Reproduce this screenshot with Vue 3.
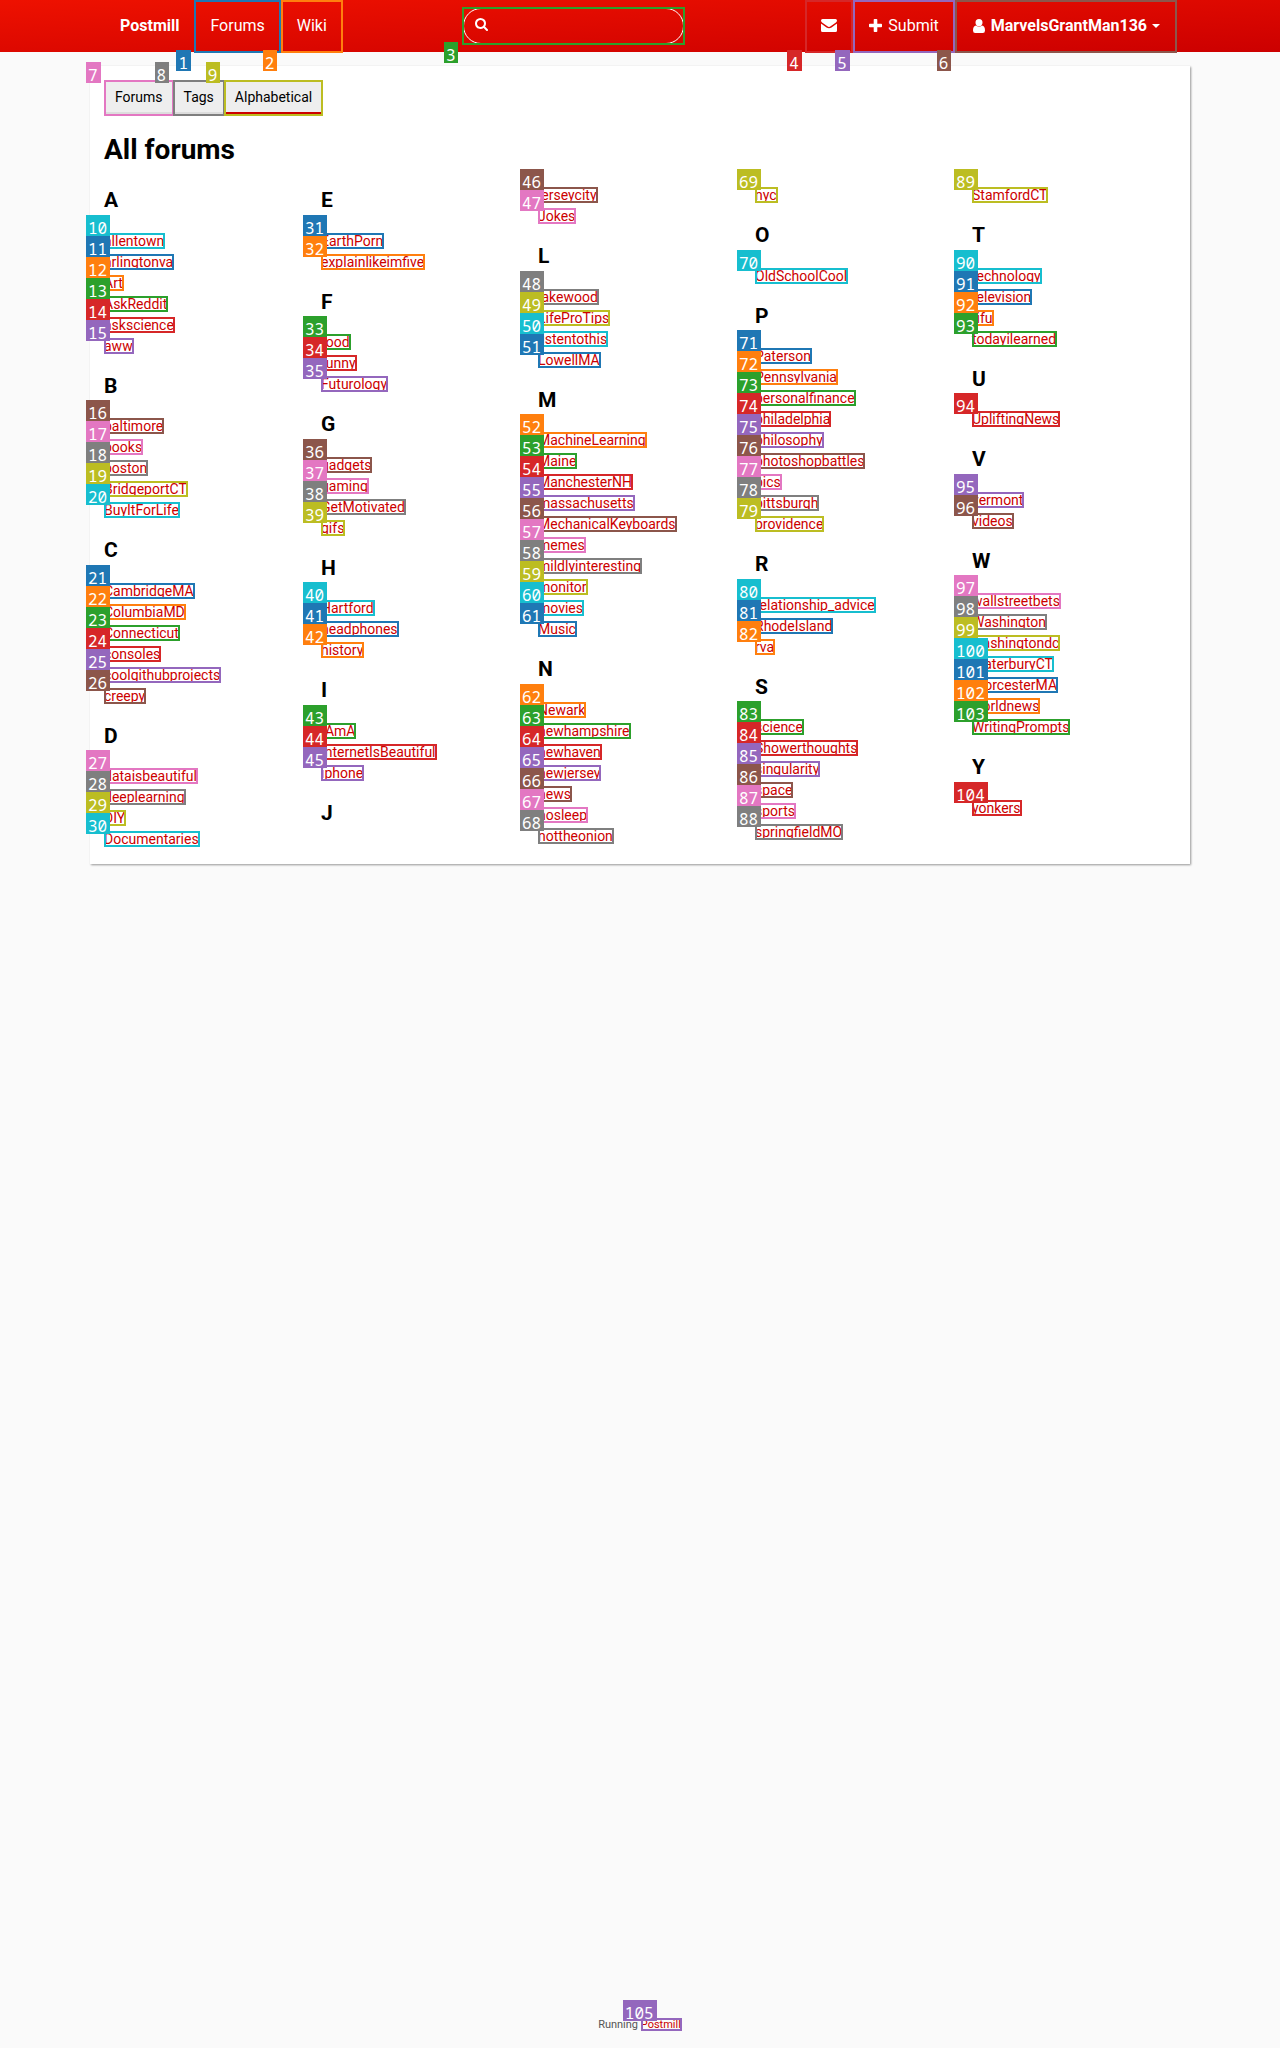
<script setup>
const palette = [
  '#1f77b4', '#ff7f0e', '#2ca02c', '#d62728', '#9467bd',
  '#8c564b', '#e377c2', '#7f7f7f', '#bcbd22', '#17becf',
]
const mark = (n) => ({ '--mark': palette[(n - 1) % 10] })

const tabs = ['Forums', 'Tags', 'Alphabetical']

const source = [
  [
    ['A', 'allentown arlingtonva Art AskReddit askscience aww'],
    ['B', 'baltimore books boston BridgeportCT BuyItForLife'],
    ['C', 'CambridgeMA ColumbiaMD Connecticut consoles coolgithubprojects creepy'],
    ['D', 'dataisbeautiful deeplearning DIY Documentaries'],
  ],
  [
    ['E', 'EarthPorn explainlikeimfive'],
    ['F', 'food funny Futurology'],
    ['G', 'gadgets gaming GetMotivated gifs'],
    ['H', 'Hartford headphones history'],
    ['I', 'IAmA InternetIsBeautiful iphone'],
    ['J', ''],
  ],
  [
    ['', 'jerseycity Jokes'],
    ['L', 'lakewood LifeProTips listentothis LowellMA'],
    ['M', 'MachineLearning Maine ManchesterNH massachusetts MechanicalKeyboards memes mildlyinteresting monitor movies Music'],
    ['N', 'Newark newhampshire newhaven newjersey news nosleep nottheonion'],
  ],
  [
    ['', 'nyc'],
    ['O', 'OldSchoolCool'],
    ['P', 'Paterson Pennsylvania personalfinance philadelphia philosophy photoshopbattles pics pittsburgh providence'],
    ['R', 'relationship_advice RhodeIsland rva'],
    ['S', 'science Showerthoughts singularity space sports springfieldMO'],
  ],
  [
    ['', 'StamfordCT'],
    ['T', 'technology television tifu todayilearned'],
    ['U', 'UpliftingNews'],
    ['V', 'vermont videos'],
    ['W', 'wallstreetbets Washington washingtondc WaterburyCT WorcesterMA worldnews WritingPrompts'],
    ['Y', 'yonkers'],
  ],
]

let next = 10
const columns = source.map((groups) =>
  groups.map(([letter, names]) => ({
    letter,
    forums: names.split(' ').filter(Boolean).map((name) => ({ name, n: next++ })),
  })),
)
</script>

<template>
  <div class="page">
    <header class="site-header">
      <nav class="nav">
        <a href="#" class="nav-link brand">Postmill</a>
        <a href="#" class="nav-link marked" :style="mark(1)">Forums<span class="badge below">1</span></a>
        <a href="#" class="nav-link marked" :style="mark(2)">Wiki<span class="badge below">2</span></a>
        <form class="search marked" :style="mark(3)" @submit.prevent>
          <label class="pill">
            <svg class="icon" width="13" height="14" viewBox="0 0 1664 1792" aria-hidden="true">
              <path fill="currentColor" d="M1152 832q0-185-131.500-316.500T704 384 387.500 515.500 256 832t131.500 316.500T704 1280t316.500-131.500T1152 832zm512 832q0 52-38 90t-90 38q-54 0-90-38l-343-342q-179 124-399 124-143 0-273.500-55.500t-225-150-150-225T0 832t55.500-273.500 150-225 225-150T704 128t273.500 55.500 225 150 150 225T1408 832q0 220-124 399l343 343q37 37 37 90z" />
            </svg>
            <input type="search" name="q" aria-label="Search">
          </label>
          <span class="badge below">3</span>
        </form>
        <a href="#" class="nav-link marked" :style="mark(4)" aria-label="Messages">
          <svg class="icon" width="16" height="13" viewBox="0 0 16 13" aria-hidden="true">
            <path fill="currentColor" d="M1.500 0h13Q16 0 16 1.500 16 2.800 14.600 3.800L9.600 7.300Q8 8.500 6.400 7.300L1.400 3.800Q0 2.800 0 1.500 0 0 1.500 0zM0 4.400Q.4 4.800 1 5.200L5.500 8.400Q8 10 10.500 8.400L15 5.200Q15.600 4.800 16 4.400V11.500Q16 13 14.500 13H1.500Q0 13 0 11.500z" />
          </svg>
          <span class="badge below">4</span>
        </a>
        <a href="#" class="nav-link marked" :style="mark(5)">
          <svg class="icon" width="13" height="13" viewBox="0 0 13 13" aria-hidden="true">
            <path fill="currentColor" d="M5.500 0h2q.8 0 .8.800v3.900h3.900q.8 0 .8.800v2q0 .8-.8.800H8.300v3.900q0 .8-.8.800h-2q-.8 0-.8-.8V8.300H.8Q0 8.300 0 7.500v-2q0-.8.800-.8h3.900V.8q0-.8.800-.8z" />
          </svg>
          Submit<span class="badge below">5</span>
        </a>
        <a href="#" class="nav-link user marked" :style="mark(6)">
          <svg class="icon" width="12" height="14" viewBox="0 0 12 14" aria-hidden="true">
            <path fill="currentColor" d="M6 0a3.500 3.500 0 0 1 3.500 3.500A3.500 3.800 0 0 1 6 7.500 3.500 3.800 0 0 1 2.500 3.500 3.500 3.500 0 0 1 6 0zM3 6.600Q6 9.500 9 6.600 12 7 12 11.500 12 14 9.800 14H2.200Q0 14 0 11.500 0 7 3 6.600z" />
          </svg>
          MarvelsGrantMan136
          <svg class="caret" width="8" height="4" viewBox="0 0 8 4" aria-hidden="true"><path fill="currentColor" d="M0 0h8L4 4z" /></svg>
          <span class="badge below">6</span>
        </a>
      </nav>
    </header>

    <main class="card">
      <nav class="tabs">
        <a
          v-for="(tab, i) in tabs"
          :key="tab"
          href="#"
          class="tab marked"
          :class="{ active: i === 2 }"
          :style="mark(i + 7)"
        >{{ tab }}<span class="badge">{{ i + 7 }}</span></a>
      </nav>
      <h1>All forums</h1>
      <div class="columns">
        <div v-for="(groups, c) in columns" :key="c" class="column">
          <section v-for="group in groups" :key="group.letter" :class="{ continued: !group.letter }">
            <h2 v-if="group.letter">{{ group.letter }}</h2>
            <ul>
              <li v-for="forum in group.forums" :key="forum.n">
                <a href="#" class="forum marked" :style="mark(forum.n)">{{ forum.name }}<span class="badge">{{ forum.n }}</span></a>
              </li>
            </ul>
          </section>
        </div>
      </div>
    </main>

    <footer>
      Running <a href="#" class="forum marked" :style="mark(105)">Postmill<span class="badge">105</span></a>
    </footer>
  </div>
</template>

<style>
body {
  margin: 0;
  background: #fafafa;
}
</style>

<style scoped>
.page {
  display: flex;
  flex-direction: column;
  min-height: 100vh;
  font: 14px/21px Roboto, sans-serif;
  color: #000;
}

a {
  color: #c00;
  text-decoration: none;
}

.marked {
  position: relative;
  outline: 2px solid var(--mark);
  outline-offset: -2px;
}

.badge {
  position: absolute;
  z-index: 2;
  top: -18px;
  left: -18px;
  box-sizing: border-box;
  height: 21px;
  padding: 0 3px 0 2px;
  background: var(--mark);
  color: #fff;
  font: 16px/27px "Noto Sans Mono", "DejaVu Sans Mono", monospace;
}

.badge.below {
  top: auto;
  bottom: -18px;
}

.site-header {
  height: 52px;
  background: linear-gradient(to bottom right, #e10, #c00);
}

.nav {
  display: flex;
  align-items: flex-start;
  max-width: 1074px;
  margin: 0 auto;
}

.nav-link {
  display: flex;
  align-items: center;
  gap: 6px;
  box-sizing: border-box;
  height: 53px;
  padding: 0 16px 2px;
  color: #fff;
  font-size: 16px;
}

.brand,
.user {
  font-weight: 700;
}

.brand {
  padding-left: 17px;
  padding-right: 15px;
}

.user {
  padding-left: 18px;
  padding-right: 17px;
}

.caret {
  margin-left: -1px;
}

.search {
  box-sizing: border-box;
  width: 223px;
  height: 38px;
  margin: 7px auto 0 119px;
  padding: 1px;
}

.pill {
  display: flex;
  align-items: center;
  gap: 8px;
  box-sizing: border-box;
  height: 36px;
  padding: 0 11px;
  border: 1px solid #fff;
  border-radius: 18px;
  color: #fff;
}

.pill .icon {
  margin-bottom: 4px;
}

.pill input {
  flex: 1;
  min-width: 0;
  border: 0;
  outline: 0;
  background: transparent;
  color: #fff;
  font: inherit;
}

.card {
  box-sizing: border-box;
  width: 100%;
  max-width: 1100px;
  margin: 14px auto 0;
  padding: 14px;
  background: #fff;
  box-shadow: 1px 1px 2px rgba(0, 0, 0, 0.4);
}

.tabs {
  display: flex;
}

.tab {
  box-sizing: border-box;
  height: 36px;
  padding: 7px 11px 0;
  border-bottom: 4px solid #ddd;
  background: #eee;
  color: #000;
}

.tab + .tab {
  margin-left: -1px;
}

.tab.active {
  border-bottom-color: #c00;
}

h1 {
  margin: 17px 0 4px;
  font-size: 28px;
  line-height: 34px;
}

.columns {
  display: grid;
  grid-template-columns: repeat(5, minmax(0, 1fr));
  gap: 13px;
}

h2 {
  margin: 0;
  padding: 13px 0;
  font-size: 21px;
  line-height: 1.6;
}

.continued {
  padding-top: 14px;
}

ul {
  margin: 0;
  padding: 0;
  list-style: none;
}

.forum {
  padding-right: 1px;
}

footer {
  margin-top: auto;
  padding: 13px;
  color: #555;
  font-size: 11px;
  line-height: 20px;
  text-align: center;
}
</style>
